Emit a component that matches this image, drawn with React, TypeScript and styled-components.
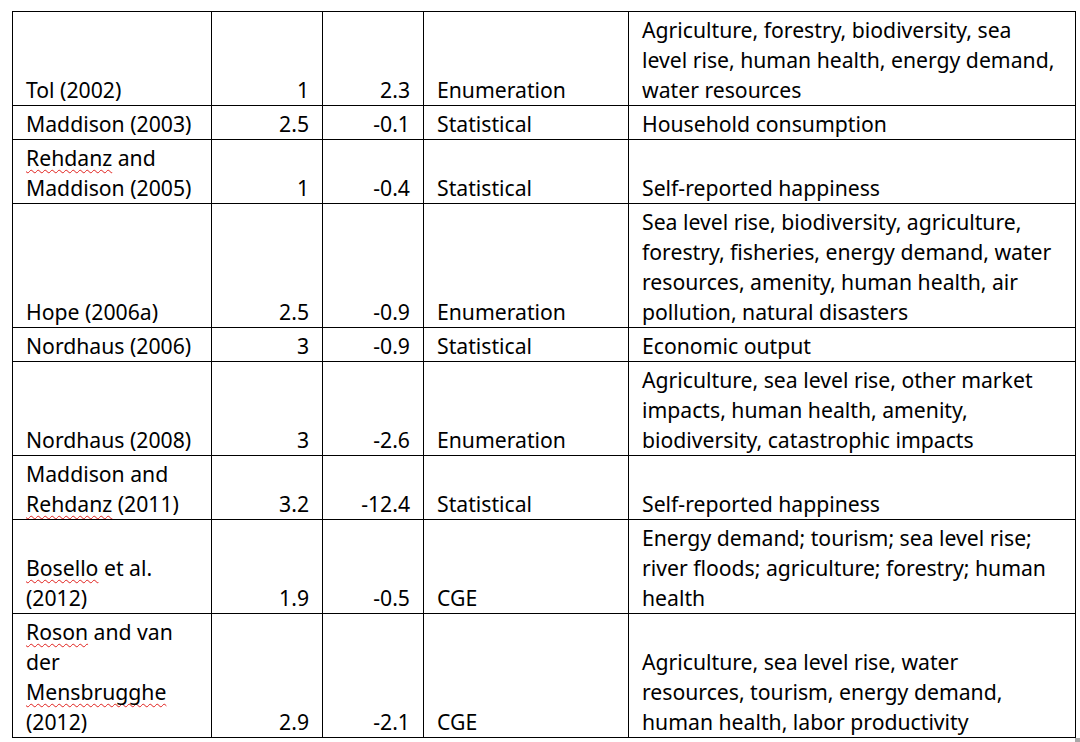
import React from "react";
import styled, { createGlobalStyle } from "styled-components";

const Global = createGlobalStyle`
  html, body { margin: 0; padding: 0; background: #ffffff; }
  body { font-family: "Noto Sans", "Open Sans", sans-serif; color: #000; }
`;

const Page = styled.div`
  padding: 11px 0 0 12px;
`;

const Table = styled.table`
  border-collapse: collapse;
  table-layout: fixed;
  width: 1063px;
  font-size: 21.2px;
  line-height: 30px;
`;

const Cell = styled.td<{ $align?: "left" | "right" }>`
  border: 1px solid #000;
  padding: 3px 13px 0 13px;
  vertical-align: bottom;
  text-align: ${(p) => p.$align ?? "left"};
  white-space: nowrap;
  overflow: hidden;
`;

const Line = styled.div`
  white-space: nowrap;
`;

const Misspelled = styled.span`
  text-decoration: underline wavy #e0201c;
  text-decoration-thickness: 1.4px;
  text-underline-offset: 3px;
  text-decoration-skip-ink: none;
`;

const Handle = styled.div`
  position: absolute;
  left: 1075px;
  top: 738px;
  width: 5px;
  height: 4px;
  background: #a8a8a8;
`;

type Row = {
  study: React.ReactNode[];
  warming: string;
  impact: string;
  method: string;
  sectors: string[];
};

const rows: Row[] = [
  {
    study: ["Tol (2002)"],
    warming: "1",
    impact: "2.3",
    method: "Enumeration",
    sectors: [
      "Agriculture, forestry, biodiversity, sea",
      "level rise, human health, energy demand,",
      "water resources",
    ],
  },
  {
    study: ["Maddison (2003)"],
    warming: "2.5",
    impact: "-0.1",
    method: "Statistical",
    sectors: ["Household consumption"],
  },
  {
    study: [
      <>
        <Misspelled>Rehdanz</Misspelled> and
      </>,
      "Maddison (2005)",
    ],
    warming: "1",
    impact: "-0.4",
    method: "Statistical",
    sectors: ["Self-reported happiness"],
  },
  {
    study: ["Hope (2006a)"],
    warming: "2.5",
    impact: "-0.9",
    method: "Enumeration",
    sectors: [
      "Sea level rise, biodiversity, agriculture,",
      "forestry, fisheries, energy demand, water",
      "resources, amenity, human health, air",
      "pollution, natural disasters",
    ],
  },
  {
    study: ["Nordhaus (2006)"],
    warming: "3",
    impact: "-0.9",
    method: "Statistical",
    sectors: ["Economic output"],
  },
  {
    study: ["Nordhaus (2008)"],
    warming: "3",
    impact: "-2.6",
    method: "Enumeration",
    sectors: [
      "Agriculture, sea level rise, other market",
      "impacts, human health, amenity,",
      "biodiversity, catastrophic impacts",
    ],
  },
  {
    study: [
      "Maddison and",
      <>
        <Misspelled>Rehdanz</Misspelled> (2011)
      </>,
    ],
    warming: "3.2",
    impact: "-12.4",
    method: "Statistical",
    sectors: ["Self-reported happiness"],
  },
  {
    study: [
      <>
        <Misspelled>Bosello</Misspelled> et al.
      </>,
      "(2012)",
    ],
    warming: "1.9",
    impact: "-0.5",
    method: "CGE",
    sectors: [
      "Energy demand; tourism; sea level rise;",
      "river floods; agriculture; forestry; human",
      "health",
    ],
  },
  {
    study: [
      <>
        <Misspelled>Roson</Misspelled> and van
      </>,
      "der",
      <Misspelled>Mensbrugghe</Misspelled>,
      "(2012)",
    ],
    warming: "2.9",
    impact: "-2.1",
    method: "CGE",
    sectors: [
      "Agriculture, sea level rise, water",
      "resources, tourism, energy demand,",
      "human health, labor productivity",
    ],
  },
];

export default function App() {
  return (
    <>
      <Global />
      <Page>
        <Table>
          <colgroup>
            <col style={{ width: 199 }} />
            <col style={{ width: 111 }} />
            <col style={{ width: 101 }} />
            <col style={{ width: 205 }} />
            <col style={{ width: 447 }} />
          </colgroup>
          <tbody>
            {rows.map((r, i) => (
              <tr key={i}>
                <Cell>
                  {r.study.map((s, j) => (
                    <Line key={j}>{s}</Line>
                  ))}
                </Cell>
                <Cell $align="right">{r.warming}</Cell>
                <Cell $align="right">{r.impact}</Cell>
                <Cell>{r.method}</Cell>
                <Cell>
                  {r.sectors.map((s, j) => (
                    <Line key={j}>{s}</Line>
                  ))}
                </Cell>
              </tr>
            ))}
          </tbody>
        </Table>
      </Page>
      <Handle />
    </>
  );
}
